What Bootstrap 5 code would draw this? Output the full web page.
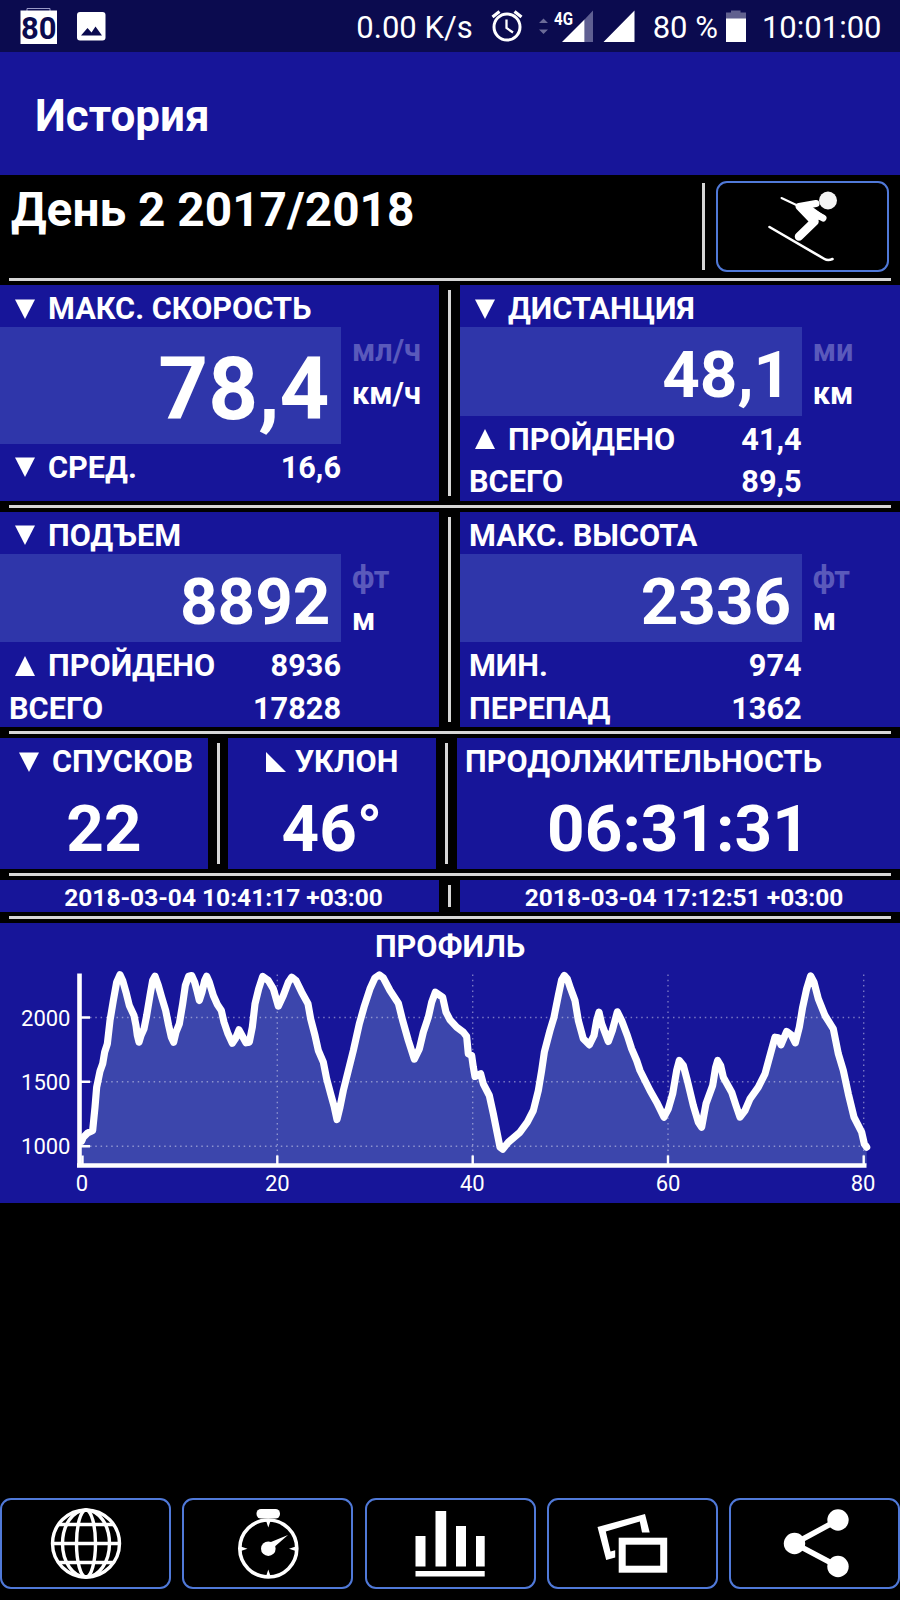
<!DOCTYPE html>
<html lang="ru">
<head>
<meta charset="utf-8">
<meta name="viewport" content="width=device-width, initial-scale=1">
<title>История</title>
<link href="https://cdn.jsdelivr.net/npm/bootstrap@5.3.0/dist/css/bootstrap.min.css" rel="stylesheet">
<style>
  :root { --panel: #171599; --value: #2f36aa; --rule: #d6d6d6; --edge: #5079d8; --line: 42.4px; }
  body { background: #000; color: #fff; font-family: Roboto, "Liberation Sans", sans-serif; font-weight: 700; width: 900px; height: 1600px; overflow: hidden; white-space: nowrap; }
  svg { display: block; flex: none; }

  .status { height: 52px; background: #0b0b4f; font-size: 31px; font-weight: 400; line-height: 49px; padding: 3px 18.5px 0 20px; }
  .appbar { height: 123px; background: var(--panel); font-size: 44px; font-weight: 700; line-height: 118px; padding: 5px 0 0 35px; }

  .heading { height: 102.5px; }
  .day { font-size: 47.8px; line-height: 56px; padding: 7px 0 0 11px; }
  .bar-v { width: 3px; background: var(--rule); }
  .tile { border: 2px solid var(--edge); border-radius: 11px; background: #000; padding: 0; }
  .sport { width: 173px; height: 91px; margin: 6px 11px 0 11px; }

  .rule { height: 11px; padding: 4.3px 9px 0; }
  .rule::before { content: ""; display: block; height: 3px; background: var(--rule); }
  .rule-top { height: 7.5px; padding-top: .5px; }

  .halves { display: grid; grid-template-columns: 439px 21px 440px; }
  .thirds { display: grid; grid-template-columns: 208px 20px 208px 21px 443px; }
  .halves > .bar-v, .thirds > .bar-v { justify-self: center; margin: 5px 0; }
  .pane { background: var(--panel); }
  .tall { height: 215.6px; }

  .line { height: var(--line); line-height: 37.4px; padding: 5px 0 0 9px; font-size: 30.7px; display: flex; align-items: center; }
  .line svg { margin: 0 13px 0 6px; }
  .figures { width: 341px; }
  .bar-v + .pane .figures { width: 341.7px; }
  .figures .line { justify-content: space-between; }
  .val { background: var(--value); text-align: right; font-size: 65.6px; height: 88.3px; line-height: 80.3px; padding: 8px 10.5px 0 0; }
  .val-lg { font-size: 87px; height: 116.4px; line-height: 107.4px; padding: 9px 11.5px 0 0; }
  .unit { padding-left: 11px; }
  .off { color: #5a59bb; }

  .short { height: 131px; }
  .short .line { padding-left: 0; justify-content: center; }
  .short .line svg { margin-left: 4px; }
  .sum { font-size: 65.6px; line-height: 82.6px; padding-top: 7px; text-align: center; }
  .stamp { height: 32px; font-size: 24.5px; line-height: 30px; padding-top: 2.5px; text-align: center; }
  .profile { background: var(--panel); height: 280px; }
  .profile text { font: 400 22px Roboto, "Liberation Sans", sans-serif; fill: #fff; }

  .tabs5 { display: grid; grid-template-columns: repeat(5, 171px); justify-content: space-between; margin-top: 294.500px; }
  .tabs5 .tile { height: 91px; }
</style>
</head>
<body>
<svg width="0" height="0" class="position-absolute">
  <defs>
    <symbol id="down" viewBox="0 0 20 20"><path d="M0 .5h20L10 20z" fill="#fff"/></symbol>
    <symbol id="up" viewBox="0 0 20 20"><path d="M0 20h20L10 0z" fill="#fff"/></symbol>
    <symbol id="slope" viewBox="0 0 20 20"><path d="M0 0v20h20z" fill="#fff"/></symbol>
  </defs>
</svg>

<div class="status d-flex justify-content-between">
  <svg width="90" height="46" viewBox="20 3 90 46">
    <path d="M27 11V8.5h23V11" fill="none" stroke="#9a9ac8" stroke-width="1"/>
    <rect x="20.5" y="10.500" width="36.500" height="33.500" fill="#fff"/>
    <text x="38.700" y="38.500" text-anchor="middle" textLength="35.500" lengthAdjust="spacingAndGlyphs" font-size="32" font-weight="700" fill="#0b0b4f">80</text>
    <rect x="77" y="12" width="28.500" height="28.500" rx="3" fill="#fff"/>
    <path d="M81 35.500l6.500-7.500 4 4.500 4-6 6.500 9z" fill="#0b0b4f"/>
  </svg>
  <div class="d-flex">
    <span>0.00 K/s</span>
    <svg width="180" height="46" viewBox="473 3 180 46">
      <circle cx="507" cy="27" r="13" fill="none" stroke="#fff" stroke-width="3"/>
      <path d="M506.500 19.500v8.500l6.500 4.500" fill="none" stroke="#fff" stroke-width="2.300"/>
      <path d="M492.500 17l7-5.500M521.500 17l-7-5.500" stroke="#fff" stroke-width="3.200"/>
      <path d="M539 23l4.500-4.500 4.500 4.500zM539 29.500l4.500 4.500 4.500-4.500z" fill="#6b6b98"/>
      <text x="554" y="25" font-size="19" font-weight="700" fill="#fff" textLength="19" lengthAdjust="spacingAndGlyphs">4G</text>
      <path d="M584.500 19.500V42H593V10.500z" fill="#5f5f92"/>
      <path d="M562 42l22.500-22.500V42zM603.500 42L634.500 10.500V42z" fill="#fff"/>
    </svg>
    <span>80 %</span>
    <svg width="44" height="46" viewBox="718.500 3 44 46">
      <path d="M726.500 19v-6.500h5V10.500h9.500v2h5.500V19z" fill="#61618f"/>
      <path d="M726.500 18.500h20V42h-20z" fill="#fff"/>
    </svg>
    <span>10:01:00</span>
  </div>
</div>

<header class="appbar">История</header>

<section class="heading d-flex">
  <div class="day flex-grow-1">День 2 2017/2018</div>
  <div class="bar-v mt-2 mb-2"></div>
  <button class="tile sport text-white">
    <svg width="169" height="87" viewBox="718 183 169 87" fill="none" stroke="#fff" stroke-linecap="round" stroke-linejoin="round">
      <circle cx="828" cy="200.500" r="9" fill="#f4f4f4" stroke="none"/>
      <path d="M781.500 198l17 8" stroke-width="2"/>
      <path d="M769.500 227l55 32q3.500 2 8 0" stroke-width="2.600"/>
      <path d="M816 203.500L799 206.500 811.500 219.500" stroke-width="7"/>
      <path d="M801 206l10 13 12-2-11-8z" fill="#fff" stroke-width="4"/>
      <path d="M808 210l15 8" stroke-width="7"/>
      <path d="M814.500 221.500L799 236.500" stroke-width="8.500"/>
    </svg>
  </button>
</section>
<div class="rule rule-top"></div>

<section class="halves">
  <div class="pane tall d-flex">
    <div class="figures">
      <div class="line"><span class="d-flex align-items-center"><svg width="20" height="20"><use href="#down"/></svg>МАКС. СКОРОСТЬ</span></div>
      <div class="val val-lg">78,4</div>
      <div class="line"><span class="d-flex align-items-center"><svg width="20" height="20"><use href="#down"/></svg>СРЕД.</span><span>16,6</span></div>
    </div>
    <div>
      <div class="line"></div>
      <div class="line unit off">мл/ч</div>
      <div class="line unit">км/ч</div>
    </div>
  </div>
  <div class="bar-v"></div>
  <div class="pane tall d-flex">
    <div class="figures">
      <div class="line"><span class="d-flex align-items-center"><svg width="20" height="20"><use href="#down"/></svg>ДИСТАНЦИЯ</span></div>
      <div class="val">48,1</div>
      <div class="line"><span class="d-flex align-items-center"><svg width="20" height="20"><use href="#up"/></svg>ПРОЙДЕНО</span><span>41,4</span></div>
      <div class="line"><span>ВСЕГО</span><span>89,5</span></div>
    </div>
    <div>
      <div class="line"></div>
      <div class="line unit off">ми</div>
      <div class="line unit">км</div>
    </div>
  </div>
</section>
<div class="rule"></div>

<section class="halves">
  <div class="pane tall d-flex">
    <div class="figures">
      <div class="line"><span class="d-flex align-items-center"><svg width="20" height="20"><use href="#down"/></svg>ПОДЪЕМ</span></div>
      <div class="val">8892</div>
      <div class="line"><span class="d-flex align-items-center"><svg width="20" height="20"><use href="#up"/></svg>ПРОЙДЕНО</span><span>8936</span></div>
      <div class="line"><span>ВСЕГО</span><span>17828</span></div>
    </div>
    <div>
      <div class="line"></div>
      <div class="line unit off">фт</div>
      <div class="line unit">м</div>
    </div>
  </div>
  <div class="bar-v"></div>
  <div class="pane tall d-flex">
    <div class="figures">
      <div class="line">МАКС. ВЫСОТА</div>
      <div class="val">2336</div>
      <div class="line"><span>МИН.</span><span>974</span></div>
      <div class="line"><span>ПЕРЕПАД</span><span>1362</span></div>
    </div>
    <div>
      <div class="line"></div>
      <div class="line unit off">фт</div>
      <div class="line unit">м</div>
    </div>
  </div>
</section>
<div class="rule"></div>

<section class="thirds">
  <div class="pane short">
    <div class="line"><svg width="20" height="20"><use href="#down"/></svg>СПУСКОВ</div>
    <div class="sum">22</div>
  </div>
  <div class="bar-v"></div>
  <div class="pane short">
    <div class="line"><svg width="20" height="20"  style="margin: 0 9px 0 0"><use href="#slope"/></svg>УКЛОН</div>
    <div class="sum">46°</div>
  </div>
  <div class="bar-v"></div>
  <div class="pane short">
    <div class="line justify-content-start ps-2">ПРОДОЛЖИТЕЛЬНОСТЬ</div>
    <div class="sum">06:31:31</div>
  </div>
</section>
<div class="rule"></div>

<section class="halves">
  <div class="pane stamp ps-2">2018-03-04 10:41:17 +03:00</div>
  <div class="bar-v"></div>
  <div class="pane stamp ps-2">2018-03-04 17:12:51 +03:00</div>
</section>
<div class="rule"></div>

<section class="profile">
  <div class="line justify-content-center ps-0">ПРОФИЛЬ</div>
  <svg width="900" height="237" viewBox="0 45.500 900 237">
    <g transform="scale(.33333)">
      <path id="area" fill="#3c46ac"/>
    </g>
    <g stroke="#fff" stroke-opacity=".42" stroke-width="1.400" stroke-dasharray="1.500 3.800">
      <path d="M90 97H864M90 161.300H864M90 225.700H864M277.300 54V236M472.700 54V236M668 54V236M863.700 54V236"/>
    </g>
    <path d="M79.500 53V245M77 245H866.500" fill="none" stroke="#fff" stroke-width="4.600"/>
    <path d="M81 97h9M81 161.300h9M81 225.700h9M82.500 235v9M277.300 235v9M472.700 235v9M668 235v9M863.700 235v9" stroke="#fff" stroke-width="2.400"/>
    <g transform="scale(.33333)">
      <path id="curve" fill="none" stroke="#fff" stroke-width="21.500" stroke-linejoin="round" stroke-linecap="round"/>
    </g>
    <g text-anchor="end"><text x="70.500" y="105">2000</text><text x="70.500" y="169.200">1500</text><text x="70.500" y="233.500">1000</text></g>
    <g text-anchor="middle"><text x="82" y="270.700">0</text><text x="277.300" y="270.700">20</text><text x="472.300" y="270.700">40</text><text x="668" y="270.700">60</text><text x="863" y="270.700">80</text></g>
  </svg>
</section>

<nav class="tabs5">
  <button class="tile text-white d-flex justify-content-center">
    <svg width="72" height="87" viewBox="50 1500 72 87" fill="none" stroke="#fff" stroke-width="3.400">
      <circle cx="86" cy="1543.500" r="33.500"/>
      <ellipse cx="86" cy="1543.500" rx="23.500" ry="33.500"/>
      <ellipse cx="86" cy="1543.500" rx="9.500" ry="33.500"/>
      <path d="M52.500 1543.500h67M58.500 1524.500h55M58.500 1562.500h55"/>
    </svg>
  </button>
  <button class="tile text-white d-flex justify-content-center">
    <svg width="72" height="87" viewBox="231.500 1500 72 87" fill="#fff">
      <circle cx="267.800" cy="1548.500" r="28.500" fill="none" stroke="#fff" stroke-width="3.600"/>
      <rect x="256" y="1509" width="23.500" height="9.500" rx="4.500"/>
      <circle cx="267.800" cy="1548.700" r="7.300"/>
      <path d="M268 1543L287.500 1535 271.500 1549zM265.300 1520h5l-2.500 7.500zM265.300 1577h5l-2.500-7.500zM239.500 1546.200v5l7.500-2.500zM296 1546.200v5l-7.500-2.500z"/>
    </svg>
  </button>
  <button class="tile text-white d-flex justify-content-center">
    <svg width="72" height="87" viewBox="413.500 1500 72 87" fill="#fff">
      <path d="M415 1536h10v30.500h-10zM435 1511h10.700v55.500H435zM455.500 1526h10v40.500h-10zM475.500 1536h8.700v30.500h-8.700zM415 1571h69.200v5.500H415z"/>
    </svg>
  </button>
  <button class="tile text-white d-flex justify-content-center">
    <svg width="72" height="87" viewBox="595.500 1500 72 87" fill="none" stroke="#fff">
      <rect x="621.700" y="1541.200" width="41.500" height="28" stroke-width="7"/>
      <path d="M597 1527l47.500-13 4.700 18.500h-7.700l-2.200-11-34 10 4.700 20 4.700-1.300v7.300l-9 2.500z" fill="#fff" stroke="none"/>
    </svg>
  </button>
  <button class="tile text-white d-flex justify-content-center">
    <svg width="72" height="87" viewBox="777.500 1500 72 87" fill="#fff">
      <path d="M836.500 1520L793 1543.500l43.500 23" fill="none" stroke="#fff" stroke-width="5.500"/>
      <circle cx="836.500" cy="1520" r="10.700"/><circle cx="793" cy="1543.500" r="10.700"/><circle cx="836.500" cy="1566.500" r="10.700"/>
    </svg>
  </button>
</nav>

<script>
  // Elevation track, x then y, in thirds of a pixel.
  const track = '245,662 250,650 262,638 278,630 285,560 290,500 300,452 308,430 314,395 322,370 330,300 340,240 350,185 360,163 368,180 378,215 388,255 402,285 408,315 412,345 417,365 423,345 432,325 440,285 450,225 458,180 465,167 475,195 485,230 497,270 506,315 514,350 521,365 528,335 538,310 548,250 556,195 566,167 575,165 584,185 592,215 598,240 606,215 614,180 620,167 628,185 640,225 652,252 664,270 672,305 684,340 697,368 706,355 717,328 726,345 738,367 748,365 757,320 765,250 776,205 788,168 805,180 820,205 835,257 850,225 865,185 875,170 888,180 905,215 924,250 932,295 945,345 955,390 970,425 980,475 992,520 1003,560 1011,597 1020,560 1030,510 1045,450 1060,390 1078,310 1092,260 1110,205 1125,172 1138,163 1150,172 1170,210 1195,248 1208,300 1225,360 1243,416 1258,385 1270,335 1285,290 1295,245 1306,215 1328,230 1338,275 1350,298 1370,320 1390,335 1400,348 1405,400 1415,405 1420,440 1425,468 1442,460 1450,490 1468,525 1480,580 1492,640 1500,680 1508,686 1525,665 1560,635 1582,605 1600,570 1615,510 1625,450 1633,395 1650,330 1662,290 1675,225 1685,178 1693,165 1702,175 1712,205 1725,240 1735,300 1750,355 1768,373 1782,345 1790,300 1797,275 1805,310 1825,363 1837,330 1852,274 1865,300 1882,345 1895,385 1910,420 1920,450 1950,510 1970,545 1992,590 2005,565 2018,520 2030,450 2038,420 2050,435 2062,480 2080,555 2095,605 2105,620 2118,550 2138,495 2147,440 2153,420 2162,435 2170,470 2195,515 2208,555 2220,590 2235,570 2250,535 2275,500 2295,460 2310,405 2325,350 2335,352 2343,373 2360,333 2374,343 2386,367 2398,320 2408,260 2420,205 2432,166 2442,185 2455,235 2475,285 2500,325 2515,400 2530,450 2545,520 2562,590 2585,635 2593,670 2600,680';
  document.getElementById('curve').setAttribute('d', 'M' + track);
  document.getElementById('area').setAttribute('d', 'M' + track + ' V735 H245 Z');
</script>
<script src="https://cdn.jsdelivr.net/npm/bootstrap@5.3.0/dist/js/bootstrap.bundle.min.js"></script>
</body>
</html>
